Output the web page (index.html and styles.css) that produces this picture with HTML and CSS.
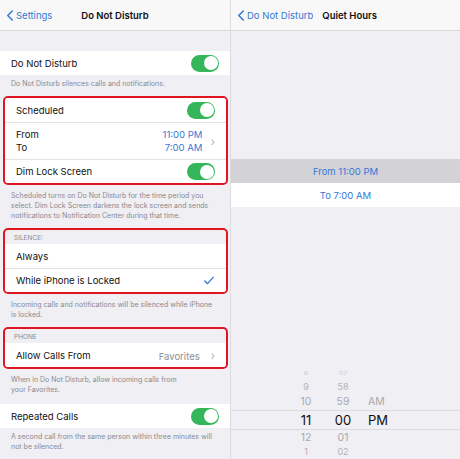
FILE: index.html
```html
<!DOCTYPE html>
<html lang="en">
<head>
  <meta charset="UTF-8">
  <title>Do Not Disturb</title>
  <link rel="stylesheet" href="styles.css">
</head>
<body>
  <div class="split">
    <div class="pane left">
      <div class="nav">
        <span class="back"><svg class="chev" viewBox="0 0 8 14"><path d="M7 1 1 7l6 6"/></svg>Settings</span>
        <span class="title center">Do Not Disturb</span>
      </div>

      <div class="spacer"></div>
      <div class="group">
        <div class="row"><span>Do Not Disturb</span><span class="toggle"></span></div>
      </div>
      <p class="note">Do Not Disturb silences calls and notifications.</p>

      <div class="mark">
        <div class="group">
          <div class="row"><span>Scheduled</span><span class="toggle"></span></div>
          <div class="row tall">
            <div class="stack"><span>From</span><span>To</span></div>
            <div class="stack times"><span>11:00 PM</span><span>7:00 AM</span></div>
            <span class="arrow">&#8250;</span>
          </div>
          <div class="row"><span>Dim Lock Screen</span><span class="toggle"></span></div>
        </div>
      </div>
      <p class="note">Scheduled turns on Do Not Disturb for the time period you select. Dim Lock Screen darkens the lock screen and sends notifications to Notification Center during that time.</p>

      <div class="mark">
        <div class="head">SILENCE:</div>
        <div class="group">
          <div class="row"><span>Always</span></div>
          <div class="row"><span>While iPhone is Locked</span><svg class="check" viewBox="0 0 12 10"><path d="M1 5.5 4.3 8.8 11 1.2"/></svg></div>
        </div>
      </div>
      <p class="note">Incoming calls and notifications will be silenced while iPhone is locked.</p>

      <div class="mark">
        <div class="head">PHONE</div>
        <div class="group">
          <div class="row"><span>Allow Calls From</span><span class="value">Favorites <span class="arrow">&#8250;</span></span></div>
        </div>
      </div>
      <p class="note">When in Do Not Disturb, allow incoming calls from<br>your Favorites.</p>

      <div class="gap"></div>
      <div class="group">
        <div class="row"><span>Repeated Calls</span><span class="toggle"></span></div>
      </div>
      <p class="note">A second call from the same person within three minutes will not be silenced.</p>
    </div>

    <div class="pane right">
      <div class="nav">
        <span class="back"><svg class="chev" viewBox="0 0 8 14"><path d="M7 1 1 7l6 6"/></svg>Do Not Disturb</span>
        <span class="title">Quiet Hours</span>
      </div>

      <div class="quiet">
        <div class="qrow active">From 11:00 PM</div>
        <div class="qrow">To 7:00 AM</div>
      </div>

      <div class="picker">
        <div class="prow far"><span class="h">8</span><span class="m">57</span><span class="ap"></span></div>
        <div class="prow near2"><span class="h">9</span><span class="m">58</span><span class="ap"></span></div>
        <div class="prow near"><span class="h">10</span><span class="m">59</span><span class="ap">AM</span></div>
        <div class="prow sel"><span class="h">11</span><span class="m">00</span><span class="ap">PM</span></div>
        <div class="prow near below"><span class="h">12</span><span class="m">01</span><span class="ap"></span></div>
        <div class="prow near2 below"><span class="h">1</span><span class="m">02</span><span class="ap"></span></div>
      </div>
    </div>
  </div>
</body>
</html>
```

FILE: styles.css
```css
* { box-sizing: border-box; }
body { margin: 0; background: #efeff4; font-family: "Inter", "Liberation Sans", sans-serif; color: #111; }
.split { display: flex; width: 460px; height: 459px; overflow: hidden; }
.pane { height: 459px; overflow: hidden; }
.left { width: 231px; flex-shrink: 0; border-right: 1px solid #dcdce0; }
.right { flex: 1; }

.nav { height: 31px; background: #f8f8f9; border-bottom: 1px solid #d8d8dc; display: flex; align-items: center; position: relative; padding-left: 7px; font-size: 9.5px; }
.back { color: #3478d4; display: flex; align-items: center; gap: 3px; }
.chev { width: 6px; height: 11px; fill: none; stroke: #3478d4; stroke-width: 2; stroke-linecap: round; stroke-linejoin: round; }
.title { font-weight: 600; color: #111; margin-left: 9px; }
.title.center { position: absolute; left: 0; right: 0; text-align: center; margin: 0; }

.spacer { height: 20px; }
.gap { height: 5px; }
.group { background: #fff; }
.row { height: 24px; display: flex; align-items: center; justify-content: space-between; padding: 0 11px; font-size: 9.5px; border-top: 1px solid #e3e3e6; }
.row:first-child { border-top: none; }
.row.tall { height: 37px; }
.stack { display: flex; flex-direction: column; gap: 2px; }
.times { margin-left: auto; align-items: flex-end; color: #3478d4; }
.arrow { color: #b8b8bd; font-size: 12px; margin-left: 8px; }
.value { color: #8e8e93; }
.check { width: 10px; height: 9px; fill: none; stroke: #3478d4; stroke-width: 1.6; stroke-linecap: round; stroke-linejoin: round; margin-right: 1px; }
.toggle { width: 28px; height: 17px; border-radius: 9px; background: #35b65a; position: relative; }
.toggle::after { content: ""; position: absolute; right: 1.5px; top: 1.5px; width: 14px; height: 14px; border-radius: 50%; background: #fff; }

.note { margin: 0; padding: 4px 11px 4px; font-size: 7px; line-height: 10px; color: #8a8a8f; }
.mark { margin: 3px 2px 2px 3px; border: 2px solid #e0151f; border-radius: 5px; overflow: hidden; }
.head { font-size: 6.5px; color: #8a8a8f; padding: 4px 9px 0; height: 14px; }

.quiet { margin-top: 128px; }
.qrow { height: 24px; display: flex; align-items: center; justify-content: center; font-size: 9.5px; color: #3478d4; background: #fff; }
.qrow.active { background: #d2d2d7; }

.picker { margin-top: 160px; }
.prow { display: flex; align-items: center; color: #a8a8ad; font-size: 10px; }
.prow .h { width: 30px; margin-left: 60px; text-align: center; }
.prow .m { width: 30px; margin-left: 7px; text-align: center; }
.prow .ap { margin-left: 10px; }
.prow.far { height: 12px; font-size: 7px; color: #c8c8cc; transform: scaleY(0.6); }
.prow.near2 { height: 14px; font-size: 9px; color: #b4b4b9; }
.prow.near { height: 17px; font-size: 10.5px; }
.prow.near.below { height: 15px; }
.prow.near2.below { height: 12px; }
.prow.sel { height: 20px; font-size: 13px; color: #111; border-top: 1px solid #dcdce0; border-bottom: 1px solid #dcdce0; }
```
